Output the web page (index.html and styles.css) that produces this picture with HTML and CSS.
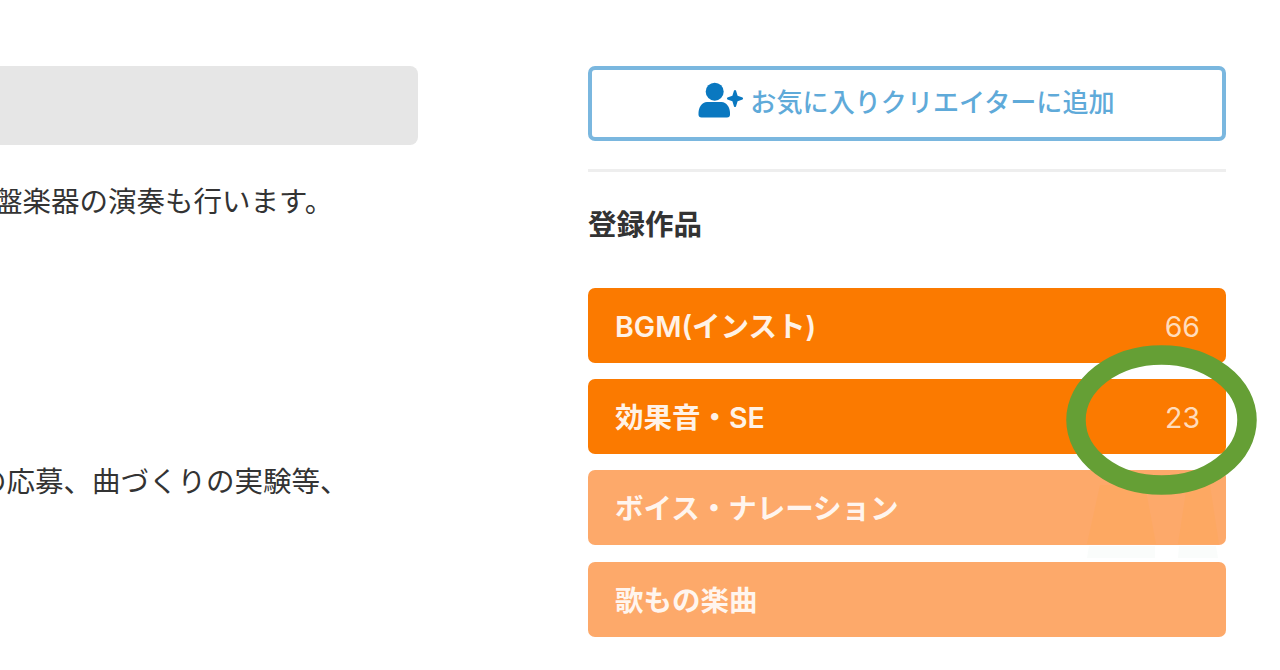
FILE: index.html
```html
<!DOCTYPE html>
<html lang="ja">
<head>
  <meta charset="UTF-8">
  <meta name="viewport" content="width=device-width, initial-scale=1.0">
  <title>クリエイター</title>
  <link rel="stylesheet" href="styles.css">
</head>
<body>
  <div class="container">
    <main class="profile">
      <div class="player"></div>
      <p class="line">盤楽器の演奏も行います。</p>
      <p class="line line-entry">の応募、曲づくりの実験等、</p>
    </main>
    <aside class="sidebar">
      <a class="btn-favorite">
        <svg class="icon" viewBox="0 0 46 38" width="46" height="38">
          <circle cx="16.700" cy="9.700" r="9"/>
          <path d="M9 20h14.500c5 0 8.500 5.500 8.500 11v1.500q0 3-3 3h-25.500q-3 0-3-3v-1.500c0-5.500 3.500-11 8.500-11z"/>
          <path d="M36 8.500q1-1 2 0l1.600 5.200 5 1.800q1 1 0 2l-5 1.800-1.600 5.200q-1 1-2 0l-1.600-5.200-5-1.800q-1-1 0-2l5-1.800z"/>
        </svg>
        <span>お気に入りクリエイターに追加</span>
      </a>
      <hr>
      <h2>登録作品</h2>
      <ul class="works">
        <li><span>BGM(インスト)</span><em>66</em></li>
        <li><span>効果音・SE</span><em>23</em></li>
        <li class="empty"><span>ボイス・ナレーション</span></li>
        <li class="empty"><span>歌もの楽曲</span></li>
      </ul>
    </aside>
  </div>
  <svg class="mark" viewBox="0 0 200 220" width="200" height="220">
    <path class="shade" d="M40 145h45l11 59h-69zM127 145h23l9 59h-41z"/>
    <path class="shade-gap" d="M29 206h66v12h-68zM119 206h37l2 12h-40z"/>
    <ellipse class="ring" cx="101.500" cy="80" rx="85.500" ry="65"/>
  </svg>
</body>
</html>
```

FILE: styles.css
```css
* {
  box-sizing: border-box;
  padding: 0;
  margin: 0;
}
body {
  width: 1280px;
  height: 670px;
  overflow: hidden;
  background-color: #fff;
  color: #333;
  font-family: Inter, "Noto Sans CJK JP", sans-serif;
  font-size: 28.5px;
}
.container {
  display: flex;
  justify-content: space-between;
  padding: 66px 54px 0 0;
}
/* 左カラム */
.profile {
  width: 418px;
  overflow: hidden;
}
.player {
  height: 79px;
  margin-bottom: 36px;
  border-radius: 0 8px 8px 0;
  background-color: #e6e6e6;
}
.line {
  margin-left: -6px;
  line-height: 42px;
  white-space: nowrap;
}
.line-entry {
  margin-top: 238px;
  margin-left: -22px;
}
/* 右カラム */
.sidebar {
  width: 638px;
}
.btn-favorite {
  display: flex;
  justify-content: center;
  align-items: center;
  gap: 6px;
  height: 75px;
  border: 4px solid #7ab7df;
  border-radius: 7px;
  color: #5faad9;
  font-size: 26.1px;
  font-weight: 500;
  line-height: 38px;
}
.icon {
  fill: #0a78c0;
  margin-top: -6px;
  margin-left: -1px;
}
.btn-favorite span {
  margin-top: -1px;
}
hr {
  height: 3px;
  margin: 28px 0 33px;
  border: none;
  background-color: #eee;
}
h2 {
  font-size: 28.5px;
  line-height: 40px;
}
.works {
  display: grid;
  gap: 16.4px;
  margin-top: 42.5px;
  list-style: none;
}
.works li {
  display: flex;
  justify-content: space-between;
  align-items: center;
  height: 75px;
  padding: 3px 26px 0 27px;
  border-radius: 7px;
  background-color: #fb7a00;
  color: #fff2e6;
  font-weight: 600;
  line-height: 40px;
}
.works em {
  color: #ffdcbc;
  font-style: normal;
  font-weight: 400;
}
.works .empty {
  background-color: #fda96a;
  color: #fff5ee;
}
/* 件数を囲む印 */
.mark {
  position: absolute;
  left: 1060px;
  top: 340px;
}
.shade {
  fill: #fda862;
}
.shade-gap {
  fill: #fafcfb;
}
.ring {
  fill: none;
  stroke: #659f35;
  stroke-width: 19.5;
}
```
